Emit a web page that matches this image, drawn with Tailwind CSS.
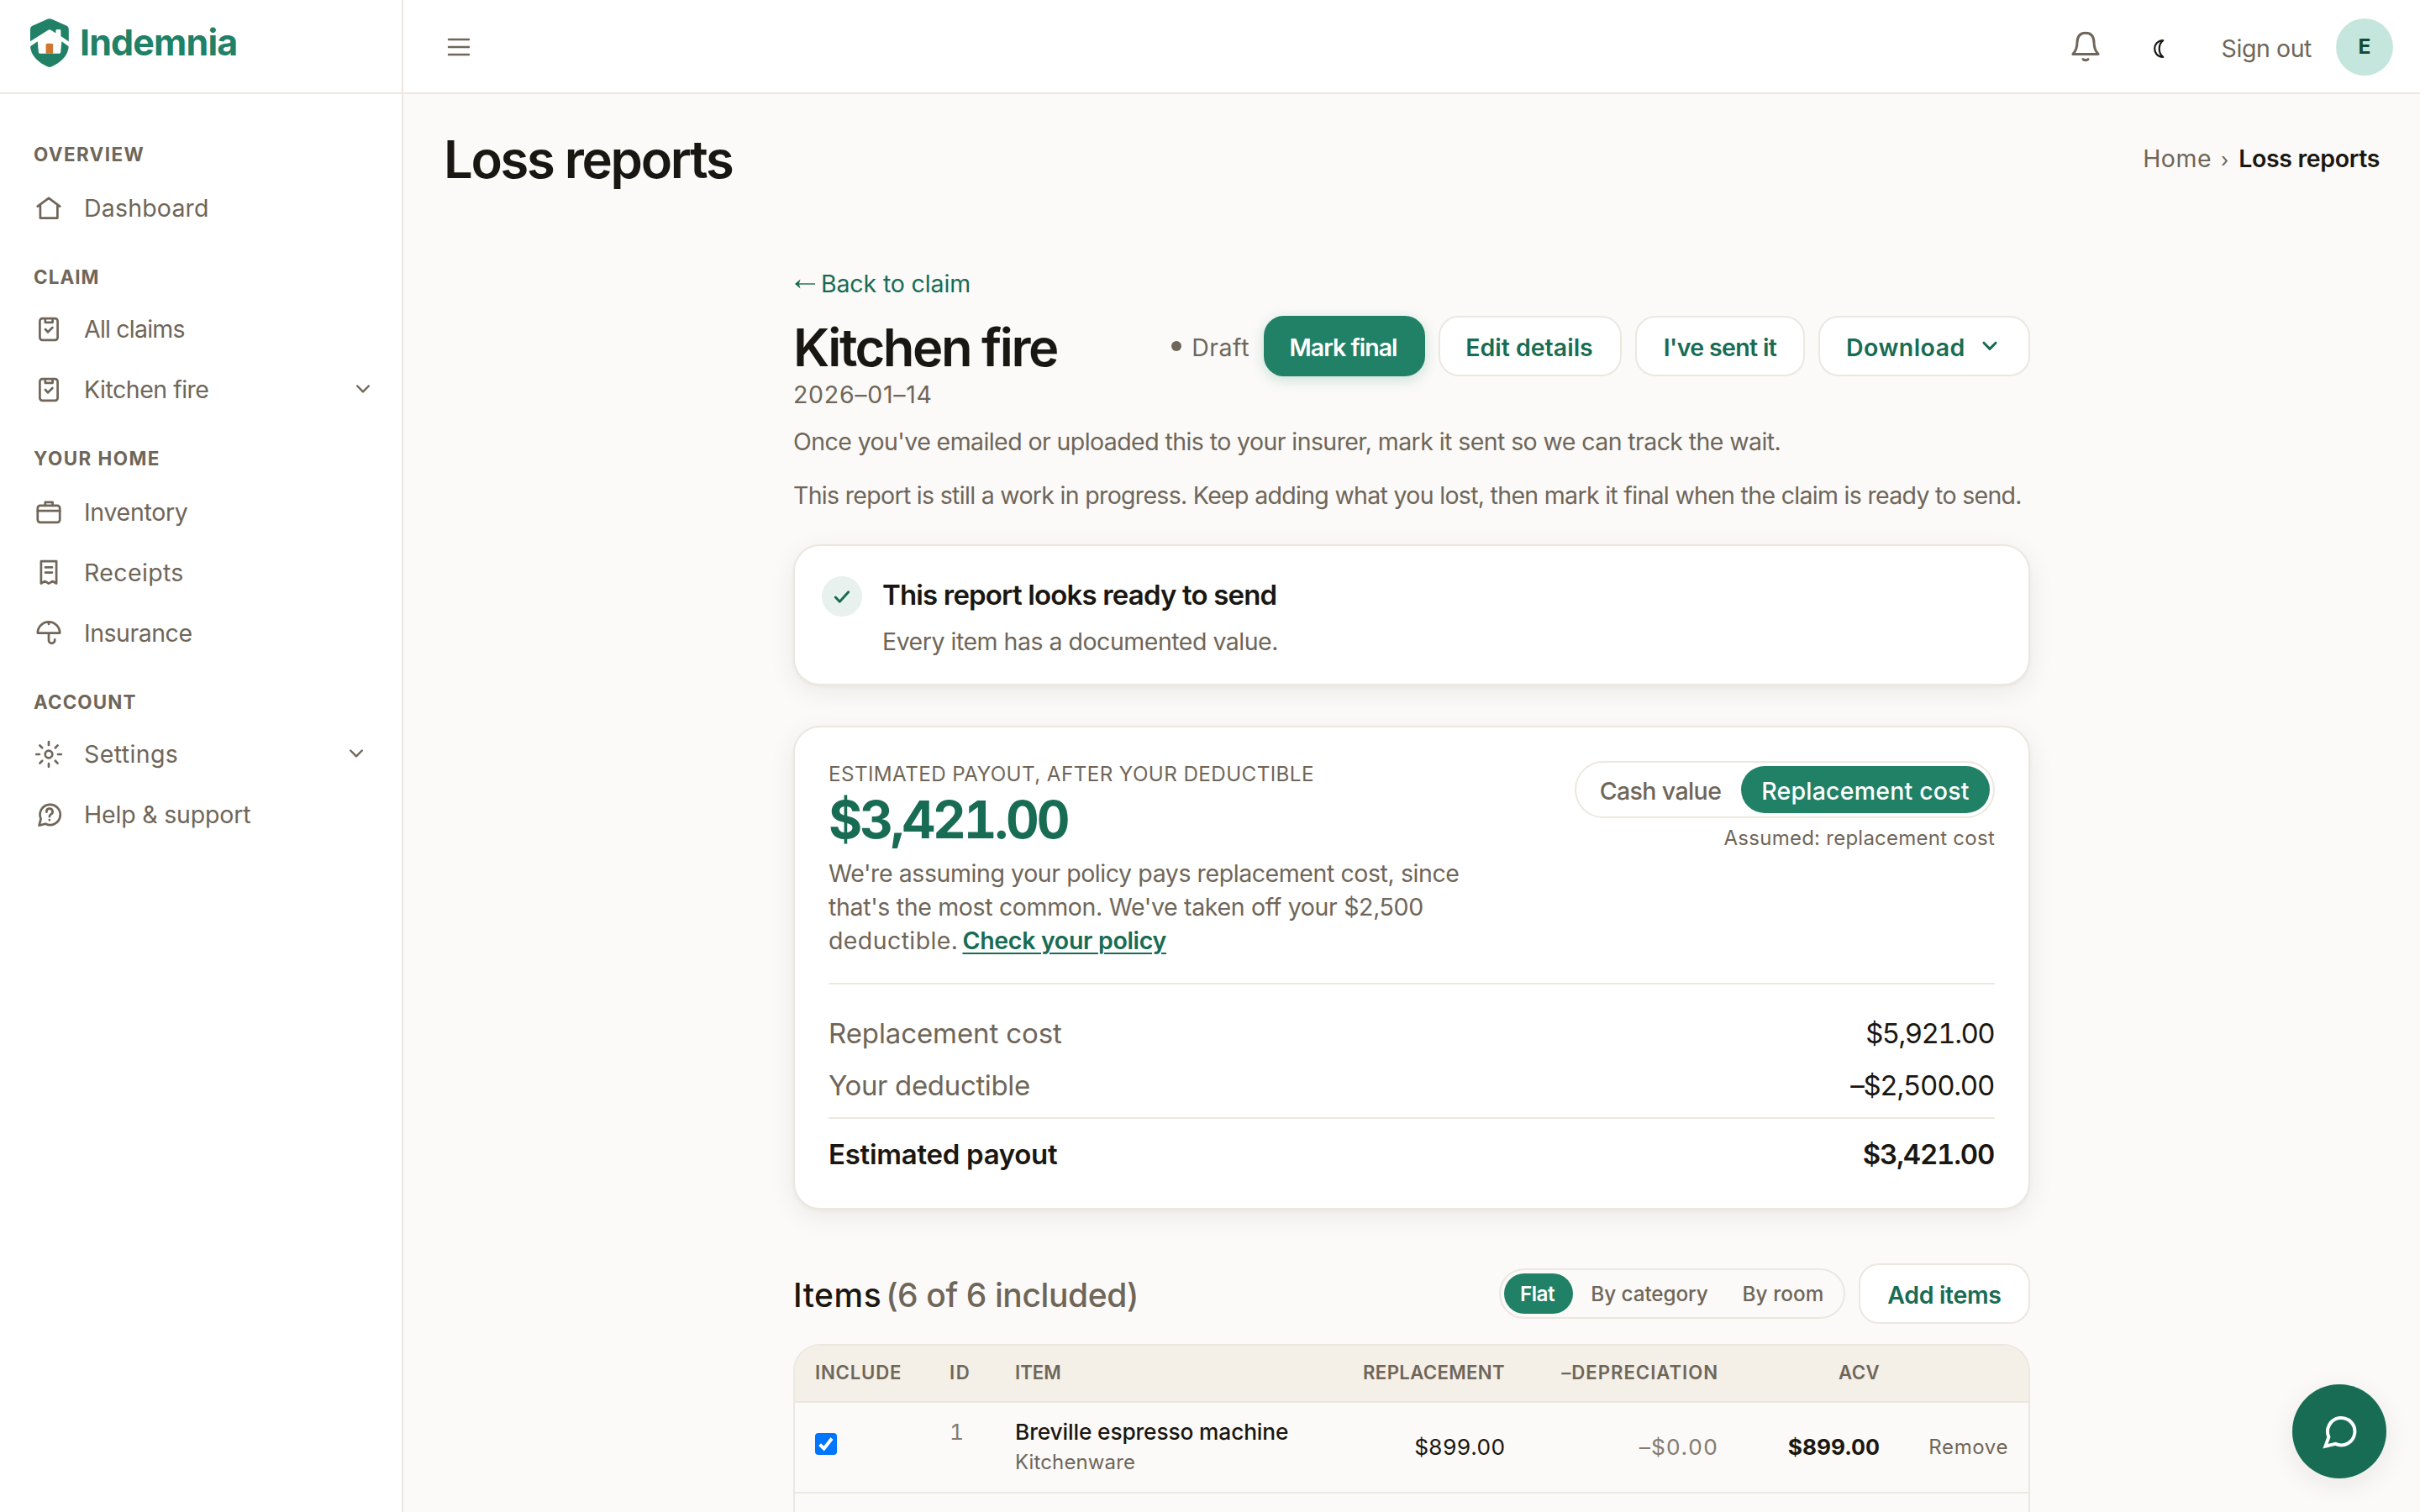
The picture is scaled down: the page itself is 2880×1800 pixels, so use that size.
<!DOCTYPE html>
<html lang="en">
<head>
<meta charset="utf-8">
<title>Loss reports - Indemnia</title>
<script src="https://cdn.jsdelivr.net/npm/@tailwindcss/browser@4"></script>
</head>
<body class="h-[1800px] w-[2880px] overflow-hidden bg-[#fbfaf8] font-['Inter',sans-serif] text-[28.5px] leading-[40px] text-[#1a1712]">
<div class="flex h-full">
  <aside class="flex w-[480px] shrink-0 flex-col border-r-2 border-[#ece7df] bg-white text-[#6f6659]">
    <div class="flex h-[112px] shrink-0 items-start border-b-2 border-[#ece7df] pt-[22px] pl-9">
      <svg class="h-[58px] w-[46px]" viewBox="0 0 46 58"><path fill="#208167" d="M20.5.8Q23-.3 25.5.8L43 8.5Q45.8 9.8 45.8 13V32C45.8 44 36 53 25 57.5Q23 58.4 21 57.5C10 53 0 44 0 32V13Q0 9.8 3 8.5Z"/><path fill="#fff" d="M-.5 27.6L21 14Q23 12.5 25 14L30.4 17.6V14.5Q30.4 13 32 13H35Q36.4 13 36.4 14.5V21L46.3 27.6V33.6L37.4 27.3L36.2 40Q36.2 41.7 34.5 41.7H11.5Q9.9 41.7 9.9 40L8.7 27.3L-.5 33.6Z"/><path fill="#d17730" d="M18.6 31.2Q18.6 29.7 20.1 29.7H25.6Q27.1 29.7 27.1 31.2V41.7H18.6Z"/></svg>
      <span class="ml-[13px] text-[43px] leading-[56px] font-bold tracking-[-0.86px] text-[#208167]">Indemnia</span>
    </div>
    <nav class="flex flex-col gap-[34px] pt-[60px] pl-10">
      <section>
        <h3 class="pb-4 text-[22.4px] leading-6 font-bold tracking-[1.42px]">OVERVIEW</h3>
        <a class="flex h-[72px] items-center gap-6"><svg class="size-9" viewBox="0 0 36 36" fill="none" stroke="currentColor" stroke-width="2.7" stroke-linecap="round" stroke-linejoin="round"><path d="M4.8 15.6L18 5.8L31.2 15.6M7.9 13.8V29.6H28.4V13.8"/></svg><span class="tracking-[0.19px]">Dashboard</span></a>
      </section>
      <section>
        <h3 class="pb-3.5 text-[22.4px] leading-6 font-bold tracking-[1.09px]">CLAIM</h3>
        <a class="flex h-[72px] items-center gap-6"><svg class="size-9" viewBox="0 0 36 36" fill="none" stroke="currentColor" stroke-width="2.7" stroke-linecap="round" stroke-linejoin="round"><rect x="7.4" y="5.2" width="21.2" height="25.6" rx="3"/><path d="M13.8 5.4V9.8H22.6V5.4M14 18L17 21.4L22.4 16"/></svg><span class="tracking-[-0.78px]">All claims</span></a>
        <a class="flex h-[72px] items-center gap-6"><svg class="size-9" viewBox="0 0 36 36" fill="none" stroke="currentColor" stroke-width="2.7" stroke-linecap="round" stroke-linejoin="round"><rect x="7.4" y="5.2" width="21.2" height="25.6" rx="3"/><path d="M13.8 5.4V9.8H22.6V5.4M14 18L17 21.4L22.4 16"/></svg><span class="tracking-[-0.5px]">Kitchen fire</span><svg class="mr-[37px] ml-auto h-3 w-[18px]" viewBox="0 0 18 12" fill="none" stroke="currentColor" stroke-width="2.4" stroke-linecap="round" stroke-linejoin="round"><path d="M2.2 1.5L9 8.4L15.8 1.5"/></svg></a>
      </section>
      <section>
        <h3 class="pb-4 text-[22.4px] leading-6 font-bold tracking-[1.49px]">YOUR HOME</h3>
        <a class="flex h-[72px] items-center gap-6"><svg class="size-9" viewBox="0 0 36 36" fill="none" stroke="currentColor" stroke-width="2.7" stroke-linecap="round" stroke-linejoin="round"><rect x="4.8" y="9.8" width="26.4" height="20" rx="3"/><path d="M4.8 16.2H31.2M13.8 9.8V5.8H22.6V9.8"/></svg><span class="tracking-[-0.31px]">Inventory</span></a>
        <a class="flex h-[72px] items-center gap-6"><svg class="size-9" viewBox="0 0 36 36" fill="none" stroke="currentColor" stroke-width="2.7" stroke-linecap="round" stroke-linejoin="round"><path d="M8.9 4.2H27.1V30.6L22.6 28L18 30.6L13.4 28L8.9 30.6ZM14 11.4H22M14 17.6H22"/></svg><span class="tracking-[0.36px]">Receipts</span></a>
        <a class="flex h-[72px] items-center gap-6"><svg class="size-9" viewBox="0 0 36 36" fill="none" stroke="currentColor" stroke-width="2.7" stroke-linecap="round" stroke-linejoin="round"><path d="M4.8 17.6A13.2 13.2 0 0 1 31.2 17.6ZM18 4.6V7M18 17.6V26.2A3.6 3.6 0 0 0 25.2 26.2V25.4"/></svg><span class="tracking-[-0.48px]">Insurance</span></a>
      </section>
      <section>
        <h3 class="pb-3.5 text-[22.4px] leading-6 font-bold tracking-[1.15px]">ACCOUNT</h3>
        <a class="flex h-[72px] items-center gap-6"><svg class="size-9" viewBox="0 0 36 36" fill="none" stroke="currentColor" stroke-width="2.7" stroke-linecap="round" stroke-linejoin="round"><circle cx="18" cy="18" r="4.3"/><path d="M18 3.2V7M18 29V32.8M3.2 18H7M29 18H32.8M7.4 7.4L10.2 10.2M25.8 25.8L28.6 28.6M7.4 28.6L10.2 25.8M25.8 10.2L28.6 7.4"/></svg><span class="tracking-[0.4px]">Settings</span><svg class="mr-[45px] ml-auto h-3 w-[18px]" viewBox="0 0 18 12" fill="none" stroke="currentColor" stroke-width="2.4" stroke-linecap="round" stroke-linejoin="round"><path d="M2.2 1.5L9 8.4L15.8 1.5"/></svg></a>
        <a class="flex h-[72px] items-center gap-6"><svg class="size-9" viewBox="0 0 36 36" fill="none" stroke="currentColor" stroke-width="2.7" stroke-linecap="round" stroke-linejoin="round"><path d="M8.6 22.8A12.1 12.1 0 1 1 14.2 28.7L6.6 30.6Z"/><path d="M15.4 14.6A3.6 3.6 0 1 1 20.6 17.4C19.2 18.2 18.9 18.8 18.9 20.2M18.9 24V24.2"/></svg><span class="tracking-[-0.19px]">Help &amp; support</span></a>
      </section>
    </nav>
  </aside>

  <div class="flex min-w-0 flex-1 flex-col">
    <header class="flex h-[112px] shrink-0 items-center border-b-2 border-[#ece7df] bg-white pt-0.5 pr-8 pl-[52px] text-[#6f6659]">
      <svg class="h-[22px] w-[28px]" viewBox="0 0 28 22" fill="none" stroke="currentColor" stroke-width="2.5" stroke-linecap="round"><path d="M2 2H26M2 11H26M2 20H26"/></svg>
      <svg class="ml-auto size-10" viewBox="0 0 40 40" fill="none" stroke="currentColor" stroke-width="3" stroke-linecap="round" stroke-linejoin="round"><path d="M4.9 28.4C8.2 25 9.9 21.5 10 14.5C10.2 7 14 3.2 20 3.2S29.8 7 30 14.5C30.1 21.5 31.8 25 35.1 28.4ZM17 34.6A3.6 2.6 0 0 0 23 34.6"/></svg>
      <svg class="ml-[60px] mt-1 h-6 w-4 text-[#1a1712]" viewBox="0 0 16 24" fill="none" stroke="currentColor" stroke-width="2.2" stroke-linejoin="round"><path d="M12.2 2.1C5.5 2.5 2.2 7 2.2 12S5.5 21.5 12.2 21.9C6.2 17 6.2 7 12.2 2.1Z"/></svg>
      <span class="ml-[66px] pt-1 tracking-[-0.42px]">Sign out</span>
      <span class="ml-[29px] flex size-[68px] items-center justify-center rounded-full bg-[#c5e6dc] pb-0.5 text-[24.5px] font-bold text-[#124a39]">E</span>
    </header>

    <main class="flex flex-1 flex-col">
      <div class="flex h-[155px] items-center justify-between pr-12 pl-12">
        <h1 class="text-[61.5px] leading-[72px] font-semibold tracking-[-2.3px]">Loss reports</h1>
        <div class="flex pt-px"><span class="mr-[11px] tracking-[0.49px] text-[#6f6659]">Home</span><span class="mr-3 pt-0.5 text-[24px] text-[#6f6659]">›</span><span class="font-semibold tracking-[-0.35px]">Loss reports</span></div>
      </div>

      <div class="mx-auto flex w-[1472px] flex-col pt-[51px]">
        <a class="flex items-center gap-[7px] tracking-[-0.14px] text-[#186c53]"><svg class="h-4 w-[26px]" viewBox="0 0 26 16" fill="none"><path d="M5 8H26" stroke="currentColor" stroke-width="1.4"/><path d="M2 8L8.5 2.5L6.8 8L8.5 13.5Z" fill="currentColor"/></svg><span>Back to claim</span></a>
        <div class="mt-[18px] flex h-[72px] items-center gap-4">
          <h2 class="mr-auto pt-[3px] text-[61.5px] leading-[72px] font-semibold tracking-[-2.5px]">Kitchen fire</h2>
          <span class="flex items-center gap-3 pr-px text-[#6f6659]"><i class="size-3 rounded-full bg-[#6f6659]"></i><span class="pt-1 tracking-[0.53px]">Draft</span></span>
          <button class="h-[72px] w-[192px] rounded-3xl bg-[#208167] pt-1 pr-[3px] font-semibold tracking-[-0.97px] text-white shadow-[0_4px_16px_rgba(32,129,103,0.22)]">Mark final</button>
          <button class="h-[72px] w-[218px] rounded-3xl border-2 border-[#ece7df] bg-white pt-1 pr-0.5 font-semibold text-[#186c53]">Edit details</button>
          <button class="h-[72px] w-[202px] rounded-3xl border-2 border-[#ece7df] bg-white pt-1 font-semibold tracking-[-0.64px] text-[#186c53]">I've sent it</button>
          <button class="flex h-[72px] w-[252px] items-center rounded-3xl border-2 border-[#ece7df] bg-white pl-[31px] font-semibold tracking-[0.45px] text-[#186c53]"><span class="pt-1">Download</span><svg class="mr-[36px] ml-auto h-3 w-5" viewBox="0 0 20 12" fill="none" stroke="currentColor" stroke-width="3" stroke-linecap="round" stroke-linejoin="round"><path d="M3 2.2L10 9.4L17 2.2"/></svg></button>
        </div>
        <p class="mt-0.5 tracking-[0.72px] text-[#6f6659]">2026–01–14</p>
        <p class="mt-4 whitespace-nowrap tracking-[-0.58px] text-[#6f6659]">Once you've emailed or uploaded this to your insurer, mark it sent so we can track the wait.</p>
        <p class="mt-6 whitespace-nowrap tracking-[-0.69px] text-[#6f6659]">This report is still a work in progress. Keep adding what you lost, then mark it final when the claim is ready to send.</p>

        <section class="mt-[38px] flex h-[168px] gap-6 rounded-[32px] border-2 border-[#ece7df] bg-white pt-9 pl-8 shadow-[0_2px_4px_rgba(28,25,18,0.04),0_8px_32px_rgba(28,25,18,0.07)]">
          <span class="flex size-12 items-center justify-center rounded-full bg-[#e8f1ed]"><svg class="size-6" viewBox="0 0 24 24" fill="none" stroke="#186c53" stroke-width="3" stroke-linecap="round" stroke-linejoin="round"><path d="M4.3 13L9.3 18.2L19.7 6.8"/></svg></span>
          <div>
            <h3 class="text-[33px] leading-[44px] font-semibold tracking-[-0.84px]">This report looks ready to send</h3>
            <p class="mt-3.5 tracking-[-0.49px] text-[#6f6659]">Every item has a documented value.</p>
          </div>
        </section>

        <section class="mt-12 h-[576px] rounded-[32px] border-2 border-[#ece7df] bg-white px-10 pt-10 shadow-[0_2px_4px_rgba(28,25,18,0.04),0_8px_32px_rgba(28,25,18,0.07)]">
          <div class="flex justify-between">
            <div>
              <p class="text-[24.2px] leading-8 tracking-[0.42px] text-[#6f6659]">ESTIMATED PAYOUT, AFTER YOUR DEDUCTIBLE</p>
              <p class="mt-0.5 text-[61.5px] leading-[72px] font-bold tracking-[-3.05px] text-[#186c53] tabular-nums">$3,421.00</p>
              <p class="mt-2 whitespace-nowrap text-[#6f6659]"><span class="tracking-[-0.42px]">We're assuming your policy pays replacement cost, since</span><br><span class="tracking-[-0.34px]">that's the most common. We've taken off your $2,500</span><br><span class="tracking-[0.4px]">deductible.</span><a class="ml-[5px] font-semibold tracking-[-0.31px] text-[#186c53] underline decoration-2 underline-offset-4">Check your policy</a></p>
            </div>
            <div class="flex flex-col items-end">
              <div class="flex h-[68px] w-[500px] rounded-full border-2 border-[#ece7df] p-1 font-medium">
                <span class="flex w-[192px] items-center justify-center pt-1 tracking-[-0.6px] text-[#6f6659]">Cash value</span>
                <span class="flex w-[296px] items-center justify-center rounded-full bg-[#208167] pt-1 tracking-[0.2px] text-white">Replacement cost</span>
              </div>
              <p class="mt-2 text-[24px] leading-8 tracking-[0.25px] text-[#6f6659]">Assumed: replacement cost</p>
            </div>
          </div>
          <dl class="mt-[30px] border-t-2 border-[#ece7df] pt-9 text-[33px] leading-[44px]">
            <div class="flex justify-between"><dt class="tracking-[-0.1px] text-[#6f6659]">Replacement cost</dt><dd class="pr-px tracking-[-1.61px] tabular-nums">$5,921.00</dd></div>
            <div class="mt-[18px] flex justify-between"><dt class="tracking-[-0.35px] text-[#6f6659]">Your deductible</dt><dd class="pr-px tracking-[-1.31px] tabular-nums">–$2,500.00</dd></div>
            <div class="mt-4 flex justify-between border-t-2 border-[#ece7df] pt-5 font-semibold"><dt class="tracking-[-0.28px]">Estimated payout</dt><dd class="pr-px tracking-[-1.24px] tabular-nums">$3,421.00</dd></div>
          </dl>
        </section>

        <div class="mt-16 flex h-[72px] items-center gap-4">
          <h2 class="mr-auto flex gap-[5px] pt-1 text-[39px] leading-[48px] font-medium"><span class="tracking-[0.5px]">Items</span><span class="tracking-[-0.41px] text-[#6f6659]">(6 of 6 included)</span></h2>
          <div class="flex h-[60px] w-[412px] rounded-full border-2 border-[#ece7df] p-1 text-[24.3px] font-medium text-[#6f6659]">
            <span class="flex w-[82px] items-center justify-center rounded-full bg-[#208167] pr-[3px] pb-px font-semibold tracking-[-0.54px] text-white">Flat</span>
            <span class="flex w-[182px] items-center justify-center pb-px tracking-[-0.09px]">By category</span>
            <span class="flex w-[136px] items-center justify-center pb-px tracking-[0.12px]">By room</span>
          </div>
          <button class="h-[72px] w-[204px] rounded-3xl border-2 border-[#ece7df] bg-white pt-1 font-semibold tracking-[-0.35px] text-[#186c53]">Add items</button>
        </div>

        <div class="mt-6 h-[200px] overflow-hidden rounded-t-[32px] border-2 border-b-0 border-[#ece7df]">
          <div class="grid h-[68px] grid-cols-[160px_78px_396px_235px_253px_193px_153px] items-center border-b-2 border-[#ece7df] bg-[#f4efe7] pb-0.5 text-[22.2px] font-semibold text-[#6f6659]">
            <span class="pl-6 tracking-[0.8px]">INCLUDE</span><span class="pl-6 tracking-[1.6px]">ID</span><span class="pl-6">ITEM</span><span class="pr-6 text-right tracking-[0.34px]">REPLACEMENT</span><span class="pr-[23px] text-right tracking-[0.97px]">–DEPRECIATION</span><span class="pr-6 text-right tracking-[0.39px]">ACV</span><span></span>
          </div>
          <div class="grid h-[108px] grid-cols-[160px_78px_396px_235px_253px_193px_153px] items-center border-b-2 border-[#ece7df] text-[26.3px] leading-9 tabular-nums">
            <span class="self-start pt-9 pl-6"><span class="flex size-[26px] items-center justify-center rounded-[4px] bg-[#0075ff]"><svg class="size-[22px]" viewBox="0 0 22 22" fill="none" stroke="#fff" stroke-width="4"><path d="M3.6 11.6L8.6 16.6L18 4.6"/></svg></span></span>
            <span class="self-start pt-[17px] pl-6 text-[#847c70]">1</span>
            <span class="flex flex-col self-start pt-[17px] pl-6"><span class="font-medium tracking-[-0.14px]">Breville espresso machine</span><span class="mt-0.5 text-[24px] leading-8 tracking-[0.12px] text-[#6f6659]">Kitchenware</span></span>
            <span class="pr-6 text-right tracking-[-0.19px]">$899.00</span><span class="pr-[23px] text-right tracking-[1px] text-[#847c70]">–$0.00</span><span class="pr-6 text-right font-bold">$899.00</span><span class="pr-6 text-right text-[24px] tracking-[0.6px] text-[#6f6659]">Remove</span>
          </div>
        </div>
      </div>
    </main>
  </div>
</div>

<button class="absolute top-[1648px] left-[2728px] flex size-28 items-center justify-center rounded-full bg-[#186c53] shadow-[0_8px_32px_rgba(28,25,18,0.08)]"><svg class="size-12" viewBox="0 0 48 48" fill="none" stroke="#fff" stroke-width="4"><path d="M11.4 30.7A16.2 16.2 0 1 1 19.5 38.9L7.5 41.7L11.4 30.7Z"/></svg></button>
</body>
</html>
